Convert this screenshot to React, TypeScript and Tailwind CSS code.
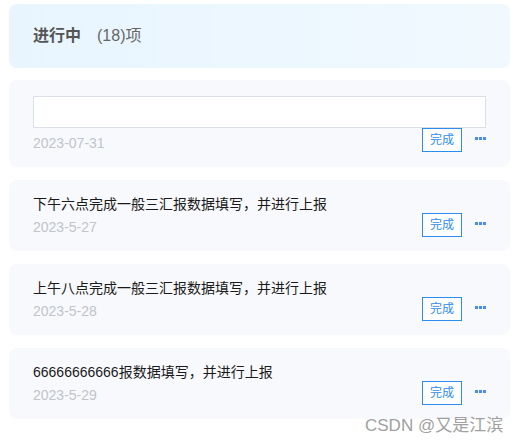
import React from "react";

const items = [
  { title: "下午六点完成一般三汇报数据填写，并进行上报", date: "2023-5-27" },
  { title: "上午八点完成一般三汇报数据填写，并进行上报", date: "2023-5-28" },
  { title: "66666666666报数据填写，并进行上报", date: "2023-5-29" },
];

function Actions() {
  return (
    <div className="flex items-center gap-[13px] shrink-0">
      <button className="h-6 w-10 border border-[#2d8cf0] bg-white text-[12px] leading-none text-[#2d8cf0]">
        完成
      </button>
      <div className="flex items-center gap-px -mt-[3px]">
        <span className="block h-[3px] w-[3px] bg-[#4a8cf5]" />
        <span className="block h-[3px] w-[3px] bg-[#4a8cf5]" />
        <span className="block h-[3px] w-[3px] bg-[#4a8cf5]" />
      </div>
    </div>
  );
}

export default function App() {
  return (
    <div
      className="relative h-[444px] w-[517px] bg-white pl-[9px] pr-[7px] pt-1"
      style={{ fontFamily: '"Liberation Sans", Arial, "Noto Sans CJK SC", sans-serif' }}
    >
      <div className="flex h-16 items-center rounded-lg bg-gradient-to-r from-[#e8f5ff] to-[#f1f9ff] px-6">
        <span className="text-[16px] font-bold text-[#555]">进行中</span>
        <span className="ml-4 text-[16px] text-[#666]">(18)项</span>
      </div>

      <div className="mt-3 flex flex-col gap-[13px]">
        <div className="rounded-lg bg-[#f8f9fd] px-6 pb-[14px] pt-4">
          <div className="h-8 border border-[#dcdfe6] bg-white" />
          <div className="flex items-end justify-between">
            <div className="mt-[5px] text-[14px] leading-5 text-[#c0c4cc]">2023-07-31</div>
            <div className="mb-px">
              <Actions />
            </div>
          </div>
        </div>

        {items.map((it) => (
          <div key={it.date} className="flex items-end justify-between rounded-lg bg-[#f8f9fd] px-6 pb-[14px] pt-[14px]">
            <div>
              <div className="text-[14px] leading-5 text-[#1a1a1a]">{it.title}</div>
              <div className="mt-[3px] text-[14px] leading-5 text-[#c0c4cc]">{it.date}</div>
            </div>
            <Actions />
          </div>
        ))}
      </div>

      <div className="absolute left-[365px] top-[414px] text-[17px] leading-6 text-[#a0a0a0]">
        CSDN @又是江滨
      </div>
    </div>
  );
}
